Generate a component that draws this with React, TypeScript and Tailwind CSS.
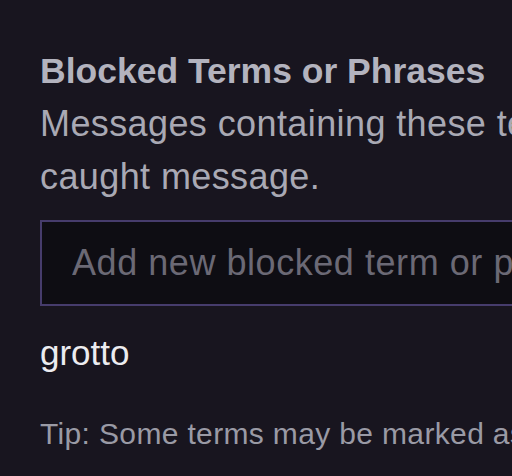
export default function App() {
    return (
        <div className="w-[512px] h-[476px] overflow-hidden bg-[#18151f] font-['Liberation_Sans',Arial,sans-serif]">
            <div className="w-[1000px] pl-[40px] pt-[50px]">
                <h2 className="text-[35.5px] leading-[42px] font-bold text-[#b3b3be]">
                    Blocked Terms or Phrases
                </h2>
                <p className="mt-[5px] text-[36px] leading-[53px] tracking-[0.4px] text-[#a9a9b4] whitespace-nowrap">
                    Messages containing these terms will be held for review. Select a term to see the last
                    <br />
                    caught message.
                </p>
                <input
                    className="mt-[17px] block w-[900px] h-[86px] border-2 border-[#463c6c] bg-[#0e0d13] pl-[30px] text-[36px] tracking-[0.55px] text-[#efeff1] placeholder:text-[#6b6975] outline-none"
                    type="text"
                    placeholder="Add new blocked term or phrase"
                />
                <div className="mt-[26px] text-[35px] leading-[42px] text-[#ececf0]">grotto</div>
                <p className="mt-[42px] text-[30px] leading-[36px] tracking-[0.35px] text-[#9a9aa5] whitespace-nowrap">
                    Tip: Some terms may be marked as blocked by AutoMod.
                </p>
            </div>
        </div>
    );
}
